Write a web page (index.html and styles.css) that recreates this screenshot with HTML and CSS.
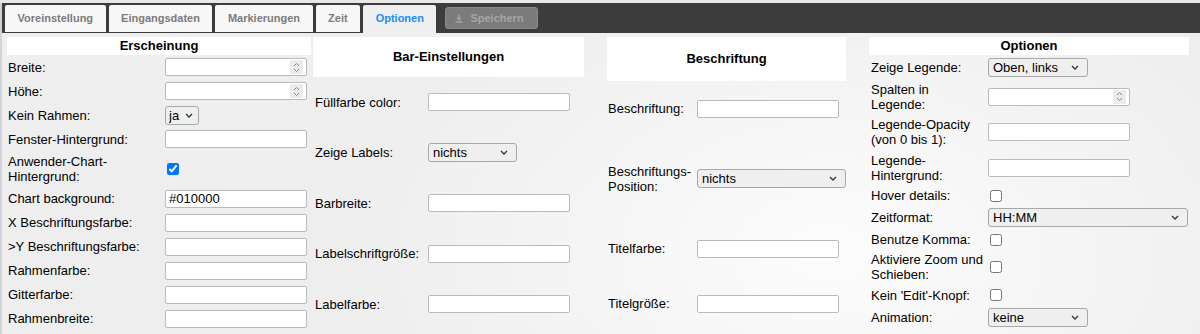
FILE: index.html
```html
<!DOCTYPE html>
<html lang="de">
<head>
    <meta charset="UTF-8">
    <title>Flot Editor - Optionen</title>
    <link rel="stylesheet" href="styles.css">
</head>
<body>
    <div class="app">
        <div class="tabbar">
            <ul class="tabs">
                <li>Voreinstellung</li>
                <li>Eingangsdaten</li>
                <li>Markierungen</li>
                <li>Zeit</li>
                <li class="active">Optionen</li>
            </ul>
            <button class="save" disabled>
                <svg width="8" height="9" viewBox="0 0 8 9"><path d="M4 0.5v5M1.8 3.6L4 5.8l2.2-2.2M0.5 8h7" fill="none" stroke="currentColor" stroke-width="1.3"/></svg>
                Speichern
            </button>
        </div>

        <div class="panel">
            <section class="group g1">
                <h3>Erscheinung</h3>
                <div class="row"><label>Breite:</label><div class="num"><input type="text"><span class="spin"><svg width="7" height="11" viewBox="0 0 7 11"><path d="M1 4l2.5-2.5L6 4M1 7l2.5 2.5L6 7" fill="none" stroke="#888" stroke-width="1"/></svg></span></div></div>
                <div class="row"><label>Höhe:</label><div class="num"><input type="text"><span class="spin"><svg width="7" height="11" viewBox="0 0 7 11"><path d="M1 4l2.5-2.5L6 4M1 7l2.5 2.5L6 7" fill="none" stroke="#888" stroke-width="1"/></svg></span></div></div>
                <div class="row"><label>Kein Rahmen:</label><select class="select sel-tiny"><option>ja</option></select></div>
                <div class="row"><label>Fenster-Hintergrund:</label><input class="text" type="text"></div>
                <div class="row two"><label>Anwender-Chart-Hintergrund:</label><input class="check" type="checkbox" checked></div>
                <div class="row"><label>Chart background:</label><input class="text" type="text" value="#010000"></div>
                <div class="row"><label>X Beschriftungsfarbe:</label><input class="text" type="text"></div>
                <div class="row"><label>&gt;Y Beschriftungsfarbe:</label><input class="text" type="text"></div>
                <div class="row"><label>Rahmenfarbe:</label><input class="text" type="text"></div>
                <div class="row"><label>Gitterfarbe:</label><input class="text" type="text"></div>
                <div class="row"><label>Rahmenbreite:</label><input class="text" type="text"></div>
            </section>

            <section class="group g2">
                <h3>Bar-Einstellungen</h3>
                <div class="row"><label>Füllfarbe color:</label><input class="text" type="text"></div>
                <div class="row"><label>Zeige Labels:</label><select class="select sel-short"><option>nichts</option></select></div>
                <div class="row"><label>Barbreite:</label><input class="text" type="text"></div>
                <div class="row"><label>Labelschriftgröße:</label><input class="text" type="text"></div>
                <div class="row"><label>Labelfarbe:</label><input class="text" type="text"></div>
            </section>

            <section class="group g3">
                <h3>Beschriftung</h3>
                <div class="row"><label>Beschriftung:</label><input class="text" type="text"></div>
                <div class="row tall"><label>Beschriftungs-Position:</label><select class="select sel-mid"><option>nichts</option></select></div>
                <div class="row"><label>Titelfarbe:</label><input class="text" type="text"></div>
                <div class="row"><label>Titelgröße:</label><input class="text" type="text"></div>
            </section>

            <section class="group g4">
                <h3>Optionen</h3>
                <div class="row"><label>Zeige Legende:</label><select class="select sel-legend"><option>Oben, links</option></select></div>
                <div class="row two"><label>Spalten in Legende:</label><div class="num"><input type="text"><span class="spin"><svg width="7" height="11" viewBox="0 0 7 11"><path d="M1 4l2.5-2.5L6 4M1 7l2.5 2.5L6 7" fill="none" stroke="#888" stroke-width="1"/></svg></span></div></div>
                <div class="row two"><label>Legende-Opacity (von 0 bis 1):</label><input class="text" type="text"></div>
                <div class="row two"><label>Legende-Hintergrund:</label><input class="text" type="text"></div>
                <div class="row chk"><label>Hover details:</label><input class="check" type="checkbox"></div>
                <div class="row"><label>Zeitformat:</label><select class="select sel-wide"><option>HH:MM</option></select></div>
                <div class="row chk"><label>Benutze Komma:</label><input class="check" type="checkbox"></div>
                <div class="row two"><label>Aktiviere Zoom und Schieben:</label><input class="check" type="checkbox"></div>
                <div class="row chk"><label>Kein 'Edit'-Knopf:</label><input class="check" type="checkbox"></div>
                <div class="row"><label>Animation:</label><select class="select sel-legend"><option>keine</option></select></div>
            </section>
        </div>
    </div>
</body>
</html>
```

FILE: styles.css
```css
body {
    margin: 0;
    background-color: #e8e8e8;
    font-family: "Liberation Sans", Arial, sans-serif;
    font-size: 13px;
    color: #000;
    overflow: hidden;
}
.app {
    margin-top: 3px;
    border-left: 2px solid #cfd4da;
    min-height: 331px;
    background: radial-gradient(ellipse 480px 300px at 830px 250px, #fcfcfc, #eeeeee);
}
.tabbar {
    display: flex;
    align-items: flex-start;
    height: 30px;
    padding: 2px 0 0 3px;
    box-sizing: border-box;
    background-color: #3c3c3c;
}
.tabs {
    display: flex;
    list-style: none;
    margin: 0;
    padding: 0;
}
.tabs li {
    height: 27px;
    line-height: 27px;
    padding: 0 12.5px;
    margin-right: 3px;
    background-color: #f7f7f7;
    border-radius: 2px 2px 0 0;
    color: #7c7c7c;
    font-size: 11px;
    font-weight: bold;
}
.tabs li.active {
    height: 29px;
    background-color: #efefef;
    color: #1a8cff;
}
.save {
    display: flex;
    align-items: center;
    gap: 7px;
    height: 22px;
    margin: 2px 0 0 6px;
    padding: 0 13px 0 9px;
    background-color: #7b7b7b;
    border: 1px solid #8a8a8a;
    border-radius: 3px;
    color: #a6a6a6;
    font-family: inherit;
    font-size: 11px;
    font-weight: bold;
}
.panel {
    display: flex;
    align-items: flex-start;
    padding: 4px 0 0 5px;
}
.group h3 {
    margin: 0;
    background-color: #fff;
    font-size: 13px;
    font-weight: bold;
    text-align: center;
    height: 18px;
    line-height: 18px;
}
.g1 {
    width: 304px;
    margin-right: 2px;
}
.g2 {
    width: 271px;
    margin-right: 23px;
}
.g3 {
    width: 239px;
    margin-right: 23px;
}
.g4 {
    width: 320px;
}
.g2 h3 {
    height: 40px;
    line-height: 40px;
}
.g3 h3 {
    height: 44px;
    line-height: 44px;
}
.row {
    display: flex;
    align-items: center;
    height: 24px;
}
.row.two {
    height: 35.5px;
}
.row.chk {
    height: 20px;
}
.g2 .row {
    height: 50.5px;
}
.g3 .row {
    height: 55px;
}
.g3 .row.tall {
    height: 85px;
}
.row label {
    flex-shrink: 0;
    box-sizing: border-box;
    line-height: 15px;
    padding-left: 1px;
}
.g1 label {
    width: 158px;
}
.g2 label {
    width: 115px;
    padding-left: 2px;
}
.g3 label {
    width: 90px;
}
.g4 label {
    width: 119px;
    padding: 0 3px 0 2px;
}
.text {
    width: 142px;
    height: 18px;
    box-sizing: border-box;
    margin: 0;
    padding: 0 3px;
    border: 1px solid #bababa;
    border-radius: 2px;
    background-color: #fff;
    font-family: inherit;
    font-size: 13px;
    color: #000;
}
.num {
    display: flex;
    width: 142px;
    height: 18px;
    box-sizing: border-box;
    border: 1px solid #bababa;
    border-radius: 2px;
    background-color: #fff;
}
.num input {
    flex: 1;
    min-width: 0;
    border: none;
    padding: 0 3px;
    background: transparent;
    font-family: inherit;
    font-size: 13px;
}
.spin {
    display: flex;
    align-items: center;
    justify-content: center;
    width: 13px;
    margin: 1px 3px 1px 0;
    background-color: #ebebeb;
}
.select {
    appearance: none;
    -webkit-appearance: none;
    height: 19px;
    box-sizing: border-box;
    margin: 0;
    padding: 0 18px 0 4px;
    border: 1px solid #a8a8a8;
    border-radius: 3px;
    background: #efefef url("data:image/svg+xml,%3Csvg xmlns='http://www.w3.org/2000/svg' width='8' height='5'%3E%3Cpath d='M1 1l3 3 3-3' fill='none' stroke='%23333' stroke-width='1.3'/%3E%3C/svg%3E") no-repeat right 8px center;
    font-family: inherit;
    font-size: 13px;
    color: #000;
}
.sel-tiny {
    width: 34px;
    padding-left: 3px;
    background-position: right 5px center;
}
.sel-short {
    width: 89px;
}
.sel-mid {
    width: 149px;
}
.sel-legend {
    width: 100px;
}
.sel-wide {
    width: 200px;
}
.check {
    width: 12px;
    height: 12px;
    margin: 0 0 0 2px;
}
```
